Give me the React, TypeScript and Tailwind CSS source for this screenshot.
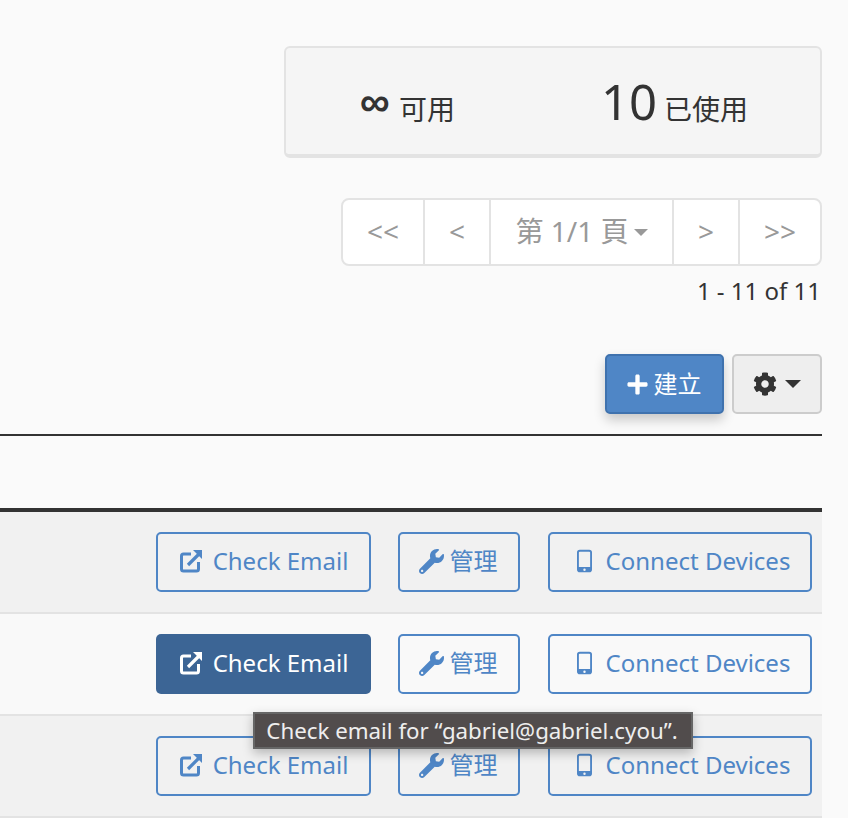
import { FaCog, FaPlus, FaWrench } from "react-icons/fa";

function ExternalIcon({ className }: { className?: string }) {
    return (
        <svg viewBox="0 0 24 24" className={className} fill="none">
            <path d="M12 5H4.500A2 2 0 0 0 2.500 7v13a2 2 0 0 0 2 2h13a2 2 0 0 0 2-2v-7" stroke="currentColor" strokeWidth="3" />
            <path d="M9 16 21 4" stroke="currentColor" strokeWidth="3.2" />
            <path d="M14 1h9v9z" fill="currentColor" />
        </svg>
    );
}

function MobileIcon({ className }: { className?: string }) {
    return (
        <svg viewBox="0 0 16 24" className={className} fill="none">
            <path fillRule="evenodd" clipRule="evenodd" fill="currentColor" d="M3 0h10a3 3 0 0 1 3 3v18a3 3 0 0 1-3 3H3a3 3 0 0 1-3-3V3a3 3 0 0 1 3-3Zm-1 3v15.500h12V3a1 1 0 0 0-1-1H3a1 1 0 0 0-1 1Zm6 17a1.300 1.300 0 1 0 0 2.600 1.300 1.300 0 0 0 0-2.600Z" />
        </svg>
    );
}

function Row({ stripe, active }: { stripe: boolean; active?: boolean }) {
    const outline = "border-2 border-[#4f86c6] text-[#4f86c6]";
    return (
        <div className={`flex h-[102px] items-center justify-end border-b-2 border-[#e3e3e3] pr-[10px] ${stripe ? "bg-[#f1f1f1]" : "bg-[#f9f9f9]"}`}>
            <button className={`flex h-[60px] w-[215px] items-center justify-center gap-[10px] rounded-[5px] pb-[2px] text-[24px] ${active ? "bg-[#3c6595] text-white" : outline}`}>
                <ExternalIcon className="h-[24px] w-[24px]" />
                Check Email
            </button>
            <button className={`ml-[27px] flex h-[60px] w-[122px] items-center justify-center gap-[6px] rounded-[5px] pr-[2px] pb-[2px] text-[24px] ${outline}`}>
                <FaWrench className="h-[25px] w-[25px]" />
                管理
            </button>
            <button className={`ml-[28px] flex h-[60px] w-[264px] items-center justify-center gap-[14px] rounded-[5px] pb-[2px] pl-[7px] text-[24px] ${outline}`}>
                <MobileIcon className="h-[24px] w-[15px]" />
                Connect Devices
            </button>
        </div>
    );
}

export default function App() {
    return (
        <div className="relative h-[818px] w-[848px] overflow-hidden bg-[#fafafa] font-['Noto_Sans','Noto_Sans_CJK_TC',sans-serif] text-[#333]">
            <div className="flex flex-col items-end pt-[46px] pr-[26px]">
                <div className="grid h-[112px] w-[538px] grid-cols-2 rounded-[6px] border-2 border-b-[4px] border-[#e3e3e3] bg-[#f5f5f5]">
                    <div className="flex items-center justify-center gap-[9px] pr-[24px]">
                        <span className="pt-[2px] font-['Liberation_Sans',sans-serif] text-[42px] leading-none font-bold">∞</span>
                        <span className="pt-[16px] text-[28px] leading-none">可用</span>
                    </div>
                    <div className="flex items-center justify-center gap-[7px] pr-[24px]">
                        <span className="text-[49px] leading-none">10</span>
                        <span className="pt-[16px] text-[28px] leading-none">已使用</span>
                    </div>
                </div>

                <div className="mt-[40px] flex h-[68px] w-[481px] rounded-[8px] border-2 border-[#e3e3e3] bg-white pb-[2px] text-[28px] text-[#999]">
                    <div className="-mb-[2px] flex w-[82px] items-center justify-center border-r-2 border-[#e3e3e3] pb-[2px]">&lt;&lt;</div>
                    <div className="-mb-[2px] flex w-[66px] items-center justify-center border-r-2 border-[#e3e3e3] pb-[2px]">&lt;</div>
                    <div className="-mb-[2px] flex w-[183px] items-center justify-center gap-[5px] border-r-2 border-[#e3e3e3] pb-[2px]">
                        第 1/1 頁
                        <span className="mt-[3px] h-0 w-0 border-x-[7.500px] border-t-[7.500px] border-x-transparent border-t-[#999]" />
                    </div>
                    <div className="-mb-[2px] flex w-[66px] items-center justify-center border-r-2 border-[#e3e3e3] pb-[2px]">&gt;</div>
                    <div className="-mb-[2px] flex flex-1 items-center justify-center pb-[2px]">&gt;&gt;</div>
                </div>

                <div className="mt-[8px] pr-[1px] text-[24px] leading-[34px]">1 - 11 of 11</div>

                <div className="mt-[46px] flex gap-[8px]">
                    <button className="flex h-[60px] w-[119px] items-center justify-center gap-[5px] rounded-[5px] border-2 border-[#3f72ae] bg-[#4f86c6] pr-[2px] text-[24px] text-white shadow-[0_6px_12px_rgba(0,0,0,0.2)]">
                        <FaPlus className="h-[23px] w-[23px]" />
                        建立
                    </button>
                    <button className="flex h-[60px] w-[90px] items-center justify-center gap-[8px] rounded-[5px] border-2 border-[#ccc] bg-[#eee]">
                        <FaCog className="h-[24px] w-[24px]" />
                        <span className="h-0 w-0 border-x-[8px] border-t-[8px] border-x-transparent border-t-[#333]" />
                    </button>
                </div>
            </div>

            <div className="mt-[20px] mr-[26px] h-[2px] bg-[#333]" />

            <div className="mt-[72px] mr-[26px] border-t-[4px] border-[#333]">
                <Row stripe />
                <Row stripe={false} active />
                <Row stripe />
            </div>

            <div className="absolute top-[712px] left-[253px] flex h-[37px] w-[440px] items-center justify-center border-2 border-[#666] bg-[#514c4c] pr-[2px] text-[22.300px] text-[#eee] shadow-[0_4px_10px_rgba(0,0,0,0.25)]">
                Check email for “gabriel@gabriel.cyou”.
            </div>
        </div>
    );
}
